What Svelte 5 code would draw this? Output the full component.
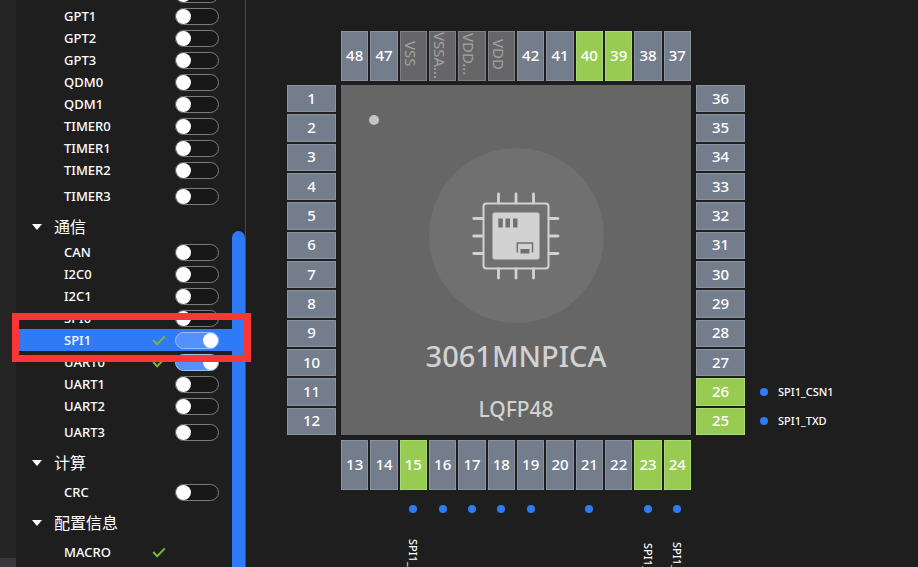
<script>
  const groups = $state([
    {
      title: '',
      items: [
        { name: 'GPT0', on: false },
        { name: 'GPT1', on: false },
        { name: 'GPT2', on: false },
        { name: 'GPT3', on: false },
        { name: 'QDM0', on: false },
        { name: 'QDM1', on: false },
        { name: 'TIMER0', on: false },
        { name: 'TIMER1', on: false },
        { name: 'TIMER2', on: false },
        { name: 'TIMER3', on: false }
      ]
    },
    {
      title: '通信',
      items: [
        { name: 'CAN', on: false },
        { name: 'I2C0', on: false },
        { name: 'I2C1', on: false },
        { name: 'SPI0', on: false },
        { name: 'SPI1', on: true, checked: true, selected: true },
        { name: 'UART0', on: true, checked: true },
        { name: 'UART1', on: false },
        { name: 'UART2', on: false },
        { name: 'UART3', on: false }
      ]
    },
    { title: '计算', items: [{ name: 'CRC', on: false }] },
    { title: '配置信息', items: [{ name: 'MACRO', checked: true, fixed: true }] }
  ]);

  const active = [15, 23, 24, 25, 26, 39, 40];
  const power = { 46: 'VSS', 45: 'VSSA...', 44: 'VDD...', 43: 'VDD' };
  const signals = { 15: 'SPI1_CSN0', 23: 'SPI1_CLK', 24: 'SPI1_RXD', 25: 'SPI1_TXD', 26: 'SPI1_CSN1' };
  const dotted = [15, 16, 17, 18, 19, 21, 23, 24];

  const up = (from) => Array.from({ length: 12 }, (_, i) => from + i);
  const down = (from) => Array.from({ length: 12 }, (_, i) => from - i);
  const sides = [
    { side: 'top', pins: down(48) },
    { side: 'left', pins: up(1) },
    { side: 'right', pins: down(36) },
    { side: 'bottom', pins: up(13) }
  ];
</script>

<div class="app">
  <div class="rail"><div class="rail-foot"></div></div>

  <aside class="panel">
    <div class="list">
      {#each groups as group}
        <section>
          {#if group.title}
            <button class="group" type="button">
              <svg width="10" height="6" viewBox="0 0 10 6"><path d="M0 0h10L5 6z" fill="#fff" /></svg>
              <span>{group.title}</span>
            </button>
          {/if}
          {#each group.items as item}
            <label class="row" class:selected={item.selected}>
              <span class="name">{item.name}</span>
              {#if item.checked}
                <svg class="check" width="14" height="12" viewBox="0 0 14 12">
                  <path d="M1.2 6 5.2 10.200 12.8 2.400" fill="none" stroke="#7ab53e" stroke-width="2" />
                </svg>
              {/if}
              {#if !item.fixed}
                <input type="checkbox" role="switch" bind:checked={item.on} />
              {:else}
                <span class="no-switch"></span>
              {/if}
              {#if item.selected}<span class="callout"></span>{/if}
            </label>
          {/each}
        </section>
      {/each}
    </div>
    <div class="scroll"><div class="thumb"></div></div>
  </aside>

  <main>
    <div class="package">
      {#each sides as { side, pins }}
        <div class="pins {side}">
          {#each pins as pin}
            <button type="button" class="pin" class:active={active.includes(pin)} class:power={power[pin]}>
              <span>{power[pin] ?? pin}</span>
            </button>
          {/each}
        </div>
      {/each}

      <div class="body">
        <span class="notch"></span>
        <div class="disc">
          <svg width="88" height="88" viewBox="0 0 88 88">
            <g fill="none" stroke="#d2d2d2" stroke-width="2.8" stroke-linecap="round">
              <path d="M26.5 1.800v9M44 1.800v9M61.5 1.800v9M26.5 77v9M44 77v9M61.5 77v9" />
              <path d="M1.800 26.5h9M1.800 44h9M1.800 61.5h9M77 26.5h9M77 44h9M77 61.5h9" />
              <rect x="11.5" y="11.5" width="65" height="65" rx="3" stroke-width="2" />
            </g>
            <rect x="20.5" y="20.5" width="47" height="47" rx="2" fill="#d2d2d2" />
            <g fill="#707070">
              <path d="M26.3 26.5h4.5v9h-4.5zM33.5 26.5h4.5v9h-4.5zM41 26.5h4.5v9h-4.5z" />
              <path d="M48.5 57h9v4.5h-9z" />
            </g>
            <path d="M45.3 60.5v-9.500h15.200v9.500" fill="none" stroke="#707070" stroke-width="1.5" />
          </svg>
        </div>
        <h1>3061MNPICA</h1>
        <p>LQFP48</p>
      </div>

      <div class="signals beside">
        {#each down(36) as pin}
          <div class="signal">
            {#if signals[pin]}<i class="dot"></i><span>{signals[pin]}</span>{/if}
          </div>
        {/each}
      </div>

      <div class="signals below">
        {#each up(13) as pin}
          <div class="signal">
            {#if dotted.includes(pin)}<i class="dot"></i>{/if}
            {#if signals[pin]}<span>{signals[pin]}</span>{/if}
          </div>
        {/each}
      </div>
    </div>
  </main>
</div>

<style>
  :global(body) {
    margin: 0;
    background: #1e1e1e;
  }
  .app {
    display: flex;
    height: 100vh;
    overflow: hidden;
    background: #1e1e1e;
    color: #fff;
    font: 500 13px/22px 'Noto Sans', 'Noto Sans CJK SC', sans-serif;
  }
  button {
    margin: 0;
    padding: 0;
    border: 0;
    background: none;
    color: inherit;
    font: inherit;
  }
  .rail {
    display: flex;
    flex: none;
    align-items: flex-end;
    width: 16px;
    background: #252525;
  }
  .rail-foot {
    width: 16px;
    height: 9px;
    background: #37373d;
  }
  .panel {
    display: flex;
    flex: none;
    width: 229px;
    border-right: 1px solid #4a4a4a;
  }
  .list {
    flex: 1;
    margin-top: -17px;
  }
  .group {
    display: flex;
    align-items: center;
    gap: 12px;
    box-sizing: border-box;
    width: 100%;
    height: 30px;
    padding: 2px 0 0 16px;
    font-size: 16px;
    font-weight: 400;
  }
  .row {
    position: relative;
    display: flex;
    align-items: center;
    height: 22px;
    padding: 0 13px 0 48px;
  }
  .row:last-child {
    height: 30px;
  }
  .row.selected {
    background: #2f7af6;
  }
  .name {
    flex: 1;
  }
  .check {
    margin-right: 9px;
  }
  .no-switch {
    width: 44px;
  }
  input {
    appearance: none;
    display: flex;
    box-sizing: border-box;
    width: 44px;
    height: 17px;
    margin: 0;
    border: 1px solid #7c7c7c;
    border-radius: 9px;
    background: #181818;
  }
  input::before {
    content: '';
    width: 15px;
    height: 15px;
    border-radius: 50%;
    background: #fff;
  }
  input:checked {
    justify-content: flex-end;
    border-color: #9cc0ff;
    background: #5391ff;
  }
  .callout {
    position: absolute;
    z-index: 2;
    inset: -16px -19px -11px -4px;
    border: 7px solid #fc3636;
    pointer-events: none;
  }
  .scroll {
    display: flex;
    width: 13px;
    padding-top: 231px;
  }
  .thumb {
    flex: 1;
    border-radius: 7px 7px 0 0;
    background: #2f7af6;
  }
  main {
    flex: 1;
    padding: 31px 0 0 41px;
  }
  .package {
    display: grid;
    grid-template: 54px 350px 55px auto / 49px 350px 49px auto;
    grid-template-areas:
      '. top . .'
      'left body right beside'
      '. bottom . .'
      '. below . .';
    column-gap: 5px;
  }
  .pins {
    display: grid;
    gap: 2px;
  }
  .top,
  .bottom,
  .below {
    grid-template-columns: repeat(12, 1fr);
  }
  .top,
  .bottom {
    height: 50px;
  }
  .left,
  .right,
  .beside {
    grid-template-rows: repeat(12, 1fr);
  }
  .top {
    grid-area: top;
  }
  .left {
    grid-area: left;
  }
  .right {
    grid-area: right;
  }
  .bottom {
    grid-area: bottom;
    align-self: end;
  }
  .pin {
    min-width: 0;
    min-height: 0;
    padding-bottom: 2px;
    border: 1px solid #8a93a0;
    background: #747d8c;
    font-size: 15px;
    line-height: 20px;
  }
  .pin.active {
    border-color: #abd873;
    background: #98cb52;
  }
  .pin.power {
    padding-bottom: 4px;
    border-color: #828284;
    background: #666668;
    color: #a2a2a4;
    font-weight: 400;
  }
  .power span {
    display: block;
    writing-mode: vertical-rl;
    white-space: nowrap;
  }
  .body {
    grid-area: body;
    display: flex;
    flex-direction: column;
    align-items: center;
    background: #666;
    color: #d2d2d2;
  }
  .notch {
    align-self: flex-start;
    width: 10px;
    height: 10px;
    margin: 30px 0 0 28px;
    border-radius: 50%;
    background: #c4c4c4;
  }
  .disc {
    display: grid;
    place-items: center;
    width: 175px;
    height: 175px;
    margin-top: 23px;
    border-radius: 50%;
    background: #707070;
  }
  h1,
  p {
    margin: 0;
    font-weight: 500;
  }
  h1 {
    margin-top: 13px;
    font-size: 29px;
    line-height: 40px;
  }
  p {
    margin-top: 19px;
    font-size: 21px;
    line-height: 28px;
  }
  .signals {
    display: grid;
    gap: 2px;
    font-size: 11px;
    line-height: 16px;
  }
  .beside {
    grid-area: beside;
    margin: 1px 0 0 10px;
  }
  .below {
    grid-area: below;
    margin-top: 15px;
  }
  .signal {
    display: flex;
    align-items: center;
  }
  .beside .signal {
    gap: 10px;
  }
  .below .signal {
    flex-direction: column;
    gap: 16px;
  }
  .below span {
    height: 76px;
    text-align: center;
    writing-mode: vertical-rl;
  }
  .dot {
    width: 8px;
    height: 8px;
    border-radius: 50%;
    background: #2f7af6;
  }
</style>
